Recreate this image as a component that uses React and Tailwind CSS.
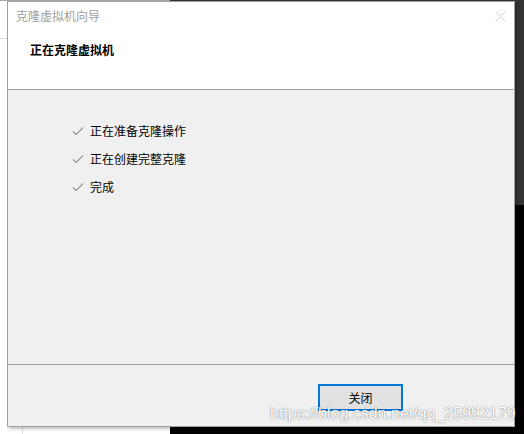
import React from "react";

function Check() {
  return (
    <svg width="12" height="12" viewBox="0 0 12 12" className="shrink-0">
      <path d="M1 6.5 L4.2 9.5 L11 2.5" fill="none" stroke="#5a5a5a" strokeWidth="1" />
    </svg>
  );
}

function CloseX() {
  return (
    <svg width="11" height="11" viewBox="0 0 11 11">
      <path d="M0.5 0.5 L10.5 10.5 M10.5 0.5 L0.5 10.5" stroke="#d4d4d4" strokeWidth="1" />
    </svg>
  );
}

export default function App() {
  const items = ["正在准备克隆操作", "正在创建完整克隆", "完成"];
  return (
    <div className="relative w-[524px] h-[434px] overflow-hidden bg-black font-['Noto_Sans_CJK_SC','Microsoft_YaHei',sans-serif]">
      {/* desktop background windows */}
      <div className="absolute left-[170px] top-0 w-[354px] h-[205px] bg-[#343434]" />
      <div className="absolute left-0 top-0 w-[170px] h-[434px] bg-white border-t border-[#a8a8a8]">
        <div className="absolute left-0 top-[37px] w-[10px] h-px bg-[#dcdcdc]" />
        <div className="absolute left-[22px] top-[400px] w-px h-[34px] bg-[#dcdcdc]" />
      </div>

      {/* dialog window */}
      <div className="absolute left-[7px] top-px w-[508px] h-[426px] border border-[#a0a0a0] bg-[#f0f0f0] flex flex-col shadow-[2px_2px_3px_rgba(0,0,0,0.25)]">
        <div className="h-[87px] bg-white flex flex-col">
          <div className="flex items-center justify-between h-4 mt-[6px] pl-2 pr-2">
            <span className="text-[12px] leading-4 text-[#a0a0a0]">克隆虚拟机向导</span>
            <CloseX />
          </div>
          <div className="mt-[18px] pl-[22px] text-[12px] leading-4 font-bold text-black">正在克隆虚拟机</div>
        </div>
        <div className="h-px bg-[#a0a0a0]" />
        <div className="h-[274px] bg-[#f0f0f0] flex flex-col pt-[27px] pl-[64px]">
          {items.map((t) => (
            <div key={t} className="h-7 flex items-center gap-[6px]">
              <Check />
              <span className="text-[12px] leading-4 text-black">{t}</span>
            </div>
          ))}
        </div>
        <div className="h-px bg-[#a0a0a0]" />
        <div className="flex-1 bg-[#f0f0f0] flex justify-end items-start pt-[19px] pr-[111px]">
          <button className="w-[85px] h-[27px] border-2 border-[#0078d7] bg-[#e1e1e1] text-[12px] leading-4 text-black flex items-center justify-center">
            关闭
          </button>
        </div>
      </div>

      {/* watermark */}
      <div className="absolute left-[270px] top-[406px] text-[16px] leading-4 font-['Liberation_Sans',Arial,sans-serif] text-white [text-shadow:0_0_1px_rgba(0,0,0,0.45),0_0_2px_rgba(0,0,0,0.25)] whitespace-nowrap">
        https://blog.csdn.net/qq_25992179
      </div>
    </div>
  );
}
